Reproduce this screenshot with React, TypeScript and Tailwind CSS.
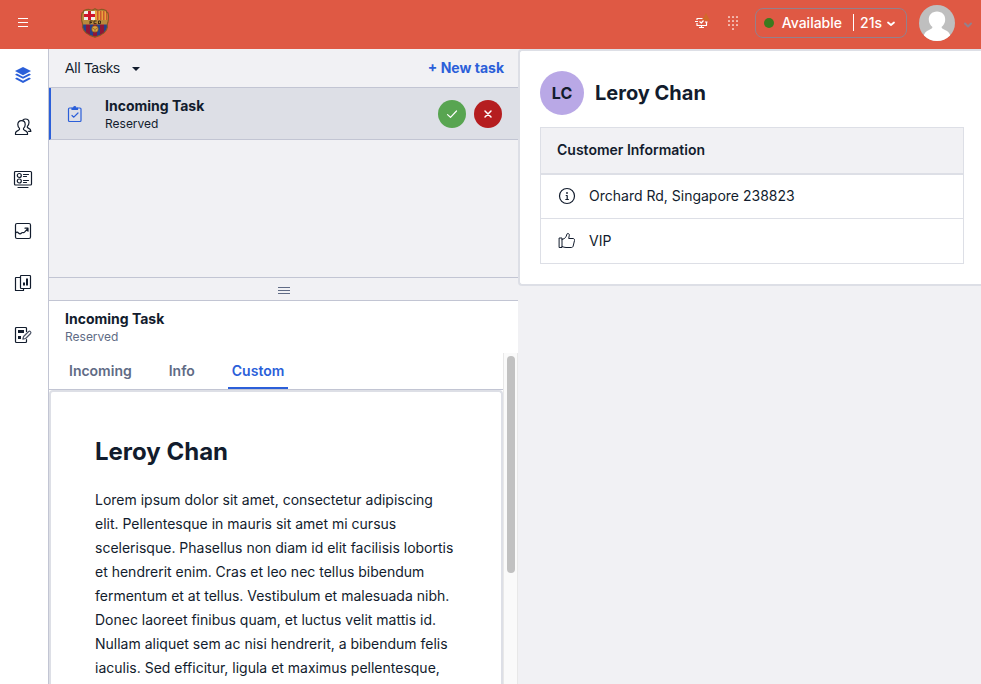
import type { ReactNode } from 'react';

function Icon({ children, size = 20, className = '' }: { children: ReactNode; size?: number; className?: string }) {
  return (
    <svg
      width={size}
      height={size}
      viewBox="0 0 20 20"
      fill="none"
      stroke="currentColor"
      strokeWidth="1.2"
      strokeLinecap="round"
      strokeLinejoin="round"
      className={className}
      aria-hidden="true"
    >
      {children}
    </svg>
  );
}

function Crest() {
  return (
    <svg width="30" height="30" viewBox="0 0 30 30" aria-hidden="true">
      <defs>
        <clipPath id="shield">
          <path d="M4 2.5Q8 .8 10.500 1.800Q13 2.600 15 .8Q17 2.600 19.500 1.800Q22 .8 26 2.500Q26.500 4.500 28 5Q29 9 28 14Q27 16 27.500 19Q26.500 26 15 29.200Q3.500 26 2.500 19Q3 16 2 14Q1 9 2 5Q3.500 4.500 4 2.500Z" />
        </clipPath>
      </defs>
      <g clipPath="url(#shield)">
        <path fill="#27408b" d="M0 12h30v18H0z" />
        <path fill="#f1eee9" d="M4 3h11v9.500H4z" />
        <path fill="#b98a3c" d="M0 0h4v14H0zM0 0h30v3H0z" />
        <path fill="#cf142b" d="M8 3h3v9.500H8zM4 6h11v3H4z" />
        <path fill="#e9a23b" d="M15 3h15v9.500H15z" />
        <path fill="#c9582f" d="M17 3h1.500v10H17zM20 3h1.500v10H20zM23 3h1.500v10H23zM26 3h1.500v10H26z" />
        <path fill="#8e1638" d="M6 16h4v14H6zM13 16h4v14h-4zM20 16h4v14h-4z" />
        <path fill="#b98a3c" d="M0 12h30v4.500H0z" />
        <path stroke="#3d2b18" strokeWidth="1" fill="none" d="M10 13v3M10 13h2.500M10 14.500h2M16.500 13h-2.500v2.600h2.500M18.500 13v3M18.500 13h2v2.600h-2" />
        <circle cx="15" cy="21" r="3.300" fill="#d9a441" stroke="#7a4a1e" strokeWidth=".6" />
        <path stroke="#7a4a1e" strokeWidth=".6" fill="none" d="M12.500 20l2.500 1.500 2.500-1.500M15 21.500v2.500" />
      </g>
      <path
        fill="none"
        stroke="#8a5a24"
        strokeWidth="1.200"
        d="M4 2.500Q8 .8 10.500 1.800Q13 2.600 15 .8Q17 2.600 19.500 1.800Q22 .8 26 2.500Q26.500 4.500 28 5Q29 9 28 14Q27 16 27.500 19Q26.500 26 15 29.200Q3.500 26 2.500 19Q3 16 2 14Q1 9 2 5Q3.500 4.500 4 2.500Z"
      />
    </svg>
  );
}

function Header() {
  return (
    <header className="flex h-[49px] shrink-0 items-center bg-[#df5944] pb-1 pr-2 text-white">
      <button type="button" aria-label="Toggle menu" className="flex w-12 justify-center pr-0.5">
        <svg width="12" height="12" viewBox="0 0 12 12" stroke="currentColor" aria-hidden="true">
          <path d="M1 1.500h10M1 5.500h10M1 9.500h10" />
        </svg>
      </button>
      <div className="ml-8">
        <Crest />
      </div>
      <div className="ml-auto flex items-center">
        <button type="button" aria-label="Connection status">
          <svg width="16" height="18" viewBox="0 0 16 18" fill="none" stroke="#fff" strokeLinejoin="round" className="mb-1" aria-hidden="true">
            <path stroke="none" fill="#d2692a" d="M12 1l4 7.500H8z" />
            <path strokeWidth="1.200" d="M8.500 6.500H3v1.500M3 11v2.500h9.500V10M1 9.500h3M7.500 13.500v2M5 15.500h5" />
            <path d="M5.500 9.500l1.800 1.500L9.500 8.500" strokeWidth="1.200" />
            <path d="M11 10h2.500" strokeWidth="1" />
          </svg>
        </button>
        <button type="button" aria-label="Dialpad" className="ml-4">
          <svg width="14" height="16" viewBox="0 0 14 16" fill="#f5c2b8" aria-hidden="true">
            {[1, 5, 9].map((y) => [2, 6, 10].map((x) => <rect key={`${x}-${y}`} x={x} y={y} width="2" height="2" rx=".4" />))}
            <rect x="6" y="13" width="2" height="2" rx=".4" />
          </svg>
        </button>
        <button
          type="button"
          className="ml-[15px] flex h-[30px] items-center rounded-lg border border-[#93808c] pl-2 pr-2.5 text-sm font-medium"
        >
          <span className="size-2.5 rounded-full bg-[#3b7a1e]" />
          <span className="ml-2">Available</span>
          <span className="ml-[11px] h-[17px] w-px bg-white" />
          <span className="ml-1.5">21s</span>
          <svg width="10" height="10" viewBox="0 0 10 10" fill="none" stroke="#fff" strokeWidth="1.800" strokeLinecap="round" strokeLinejoin="round" className="ml-1" aria-hidden="true">
            <path d="M2 4.500l3 2.500 3-2.500" />
          </svg>
        </button>
        <button type="button" aria-label="User menu" className="ml-3 flex items-center">
          <svg width="36" height="36" viewBox="0 0 36 36" aria-hidden="true">
            <defs>
              <clipPath id="avatar">
                <circle cx="18" cy="18" r="18" />
              </clipPath>
            </defs>
            <g clipPath="url(#avatar)">
              <path fill="#bfbfbf" d="M0 0h36v36H0z" />
              <path
                fill="#fff"
                d="M18 6.500c5 0 8.500 3.500 8.200 8.500-.2 3-1.700 5.500-3.700 7 .3 1.500 1.500 2 3.500 3 3 1.300 4.500 3 5.500 6V36h-27v-5c1-3 2.500-4.700 5.500-6 2-1 3.200-1.500 3.500-3-2-1.500-3.500-4-3.700-7C9.500 10 13 6.500 18 6.500z"
              />
            </g>
          </svg>
          <svg width="10" height="10" viewBox="0 0 10 10" fill="none" stroke="#93808c" strokeWidth="2" strokeLinecap="round" strokeLinejoin="round" className="ml-2 mt-1" aria-hidden="true">
            <path d="M2 3.500l3 3 3-3" />
          </svg>
        </button>
      </div>
    </header>
  );
}

const navItems: { label: string; icon: ReactNode; active?: boolean }[] = [
  {
    label: 'Agent desktop',
    active: true,
    icon: (
      <>
        <path fill="currentColor" stroke="none" d="M10 2l8 4-8 4.200L2 6z" />
        <path fill="currentColor" stroke="none" d="M3.800 8.500L10 11.700l6.200-3.200L18 9.700l-8 4.100-8-4.100zM3.800 12.500L10 15.700l6.200-3.200L18 13.700l-8 4.300-8-4.300z" />
      </>
    ),
  },
  {
    label: 'Teams',
    icon: (
      <>
        <path d="M8.500 3.700c2.300 0 3.700 1.600 3.700 3.800 0 1.700-.7 3-1.700 3.900-.3.900 0 1.500 1 1.900 1.700.6 3 1 3 3v1.200h-12v-1.200c0-2 1.300-2.400 3-3 1-.4 1.300-1 1-1.900-1-.9-1.700-2.200-1.700-3.900 0-2.200 1.400-3.800 3.700-3.800z" />
        <path d="M10 3c.8-.8 1.600-1 2.500-1 2.200 0 3.500 1.600 3.500 3.600 0 1.700-.7 2.900-1.600 3.800-.3.900 0 1.400.9 1.700 1.500.6 2.600 1.200 2.600 3.200h-2.300" />
      </>
    ),
  },
  {
    label: 'Queues',
    icon: (
      <>
        <rect x="1.500" y="2.500" width="17" height="13.500" rx="1" />
        <circle cx="6.300" cy="6.500" r="2" />
        <circle cx="6.300" cy="12" r="2" />
        <path d="M10.500 5.500h5M10.500 7.500h3M10.500 11.500h5M10.500 13.500h3M5 18.500h10" />
      </>
    ),
  },
  {
    label: 'Analytics',
    icon: (
      <>
        <rect x="2.500" y="2.500" width="15" height="15" rx="1.500" />
        <path d="M2.500 12c1-1 2-1.200 3 0 1 1 2 1.200 3 0s2 .2 3-.8l3.500-3.700M12 7.200h3v3" />
      </>
    ),
  },
  {
    label: 'Dashboards',
    icon: (
      <>
        <path d="M7.500 4.500H3a.5.5 0 0 0-.5.500v12.500h8V16" />
        <rect x="7.500" y="2.500" width="10" height="13" rx=".8" />
        <path d="M11 12.500v-3M14 12.500v-7" strokeWidth="2" strokeLinecap="butt" />
      </>
    ),
  },
  {
    label: 'Task notes',
    icon: (
      <>
        <path d="M13.500 6.500V3.500a1 1 0 0 0-1-1H3.500a1 1 0 0 0-1 1v13a1 1 0 0 0 1 1h9a1 1 0 0 0 1-1V14.500" />
        <path d="M5 6.500h6" strokeWidth="3" strokeLinecap="butt" />
        <path d="M5 12.500h3" strokeWidth="3" strokeLinecap="butt" />
        <path d="M9.800 14.200l.8-2.700 5-5c1.200-1 3 .6 2 2l-5 5z" stroke="#4b5366" />
      </>
    ),
  },
];

function SideNav() {
  return (
    <nav className="flex w-[49px] shrink-0 flex-col border-r border-[#c2c5d3] bg-white pr-0.5">
      {navItems.map((item) => (
        <a
          key={item.label}
          href="#"
          aria-label={item.label}
          className={`flex h-[52px] items-center justify-center ${item.active ? 'text-[#2b5fd9]' : 'text-[#121c2d]'}`}
        >
          <Icon>{item.icon}</Icon>
        </a>
      ))}
    </nav>
  );
}

function TaskList() {
  return (
    <section className="flex h-[228px] shrink-0 flex-col">
      <div className="flex h-[39px] items-center justify-between border-b border-[#c2c5d3] pl-4 pr-3.5">
        <button type="button" className="flex items-center font-['Liberation_Sans',sans-serif] text-sm">
          All Tasks
          <svg width="10" height="6" viewBox="0 0 10 6" fill="currentColor" className="ml-[11px] mt-0.5" aria-hidden="true">
            <path d="M1 1h8L5 5z" />
          </svg>
        </button>
        <button type="button" className="text-sm font-bold text-[#2b5fd9]">
          + New task
        </button>
      </div>
      <div className="flex h-[52px] items-center border-b border-l-2 border-b-[#c2c5d3] border-l-[#2b5fd9] bg-[#dddfe6] pl-3.5 pr-4">
        <Icon className="text-[#2b5fd9]">
          <path d="M7 4H4.500a1 1 0 0 0-1 1v11.500a1 1 0 0 0 1 1h10.500a1 1 0 0 0 1-1V5a1 1 0 0 0-1-1H12.500" />
          <path fill="currentColor" d="M7 4h1.500c.2-1.900 2.300-1.900 2.500 0h1.500v1.500h-5.500z" />
          <path d="M7 11.500l1.800 1.700L13 9" />
        </Icon>
        <div className="ml-5">
          <h2 className="text-sm/5 font-bold">Incoming Task</h2>
          <p className="text-xs">Reserved</p>
        </div>
        <button type="button" aria-label="Accept task" className="ml-auto flex size-7 items-center justify-center rounded-full bg-[#58a551] text-white">
          <Icon size={12} className="stroke-2">
            <path d="M2.500 11l5 4.500L17.500 5" />
          </Icon>
        </button>
        <button type="button" aria-label="Reject task" className="ml-2 flex size-7 items-center justify-center rounded-full bg-[#b51d1f] text-white">
          <Icon size={12} className="stroke-[2.500]">
            <path d="M5 5l10 10M15 5L5 15" />
          </Icon>
        </button>
      </div>
    </section>
  );
}

function TaskDetail() {
  const tab = 'flex h-9 items-center border-b-2 px-1 pt-0.5';
  return (
    <section className="flex min-h-0 flex-1 flex-col bg-white">
      <div className="h-[52px] shrink-0 px-4 pt-2">
        <h2 className="text-sm/5 font-bold">Incoming Task</h2>
        <p className="text-xs text-[#606b85]">Reserved</p>
      </div>
      <div className="flex min-h-0 flex-1">
        <div className="flex min-w-0 flex-1 flex-col">
          <div role="tablist" className="flex h-[37px] shrink-0 gap-[29px] border-b border-[#c2c5d3] px-4 text-sm font-semibold text-[#606b85]">
            <button type="button" role="tab" aria-selected="false" className={`${tab} border-transparent`}>Incoming</button>
            <button type="button" role="tab" aria-selected="false" className={`${tab} border-transparent`}>Info</button>
            <button type="button" role="tab" aria-selected="true" className={`${tab} border-[#2b5fd9] text-[#2b5fd9]`}>Custom</button>
          </div>
          <article className="min-h-0 flex-1 overflow-hidden rounded-t border-2 border-b-0 border-[#dddfe6] px-11 pt-11">
            <h1 className="text-2xl font-bold">Leroy Chan</h1>
            <p className="mt-5 text-sm/6">
              Lorem ipsum dolor sit amet, consectetur adipiscing elit. Pellentesque in mauris sit amet mi cursus
              scelerisque. Phasellus non diam id elit facilisis lobortis et hendrerit enim. Cras et leo nec tellus
              bibendum fermentum et at tellus. Vestibulum et malesuada nibh. Donec laoreet finibus quam, et luctus velit
              mattis id. Nullam aliquet sem ac nisi hendrerit, a bibendum felis iaculis. Sed efficitur, ligula et
              maximus pellentesque,
            </p>
          </article>
        </div>
        <div className="w-[15px] shrink-0 border-x border-[#e8e8e8] bg-[#fafafa] px-[3px] pt-[3px]">
          <div className="h-[217px] w-2 rounded-full bg-[#c1c1c1]" />
        </div>
      </div>
    </section>
  );
}

function CustomerCard() {
  return (
    <section className="rounded-l border-2 border-r-0 border-[#dddfe6] bg-white py-5 pl-5 pr-[17px]">
      <div className="flex items-center">
        <div className="flex size-11 items-center justify-center rounded-full bg-[#b9a8e6] font-bold">LC</div>
        <h1 className="ml-[11px] text-xl font-bold">Leroy Chan</h1>
      </div>
      <table className="mt-3 w-full border-collapse border border-[#dddfe6] text-left text-sm">
        <thead className="border-b-2 border-[#dddfe6] bg-[#f1f1f4]">
          <tr>
            <th scope="col" className="h-[46px] px-4 font-semibold">Customer Information</th>
          </tr>
        </thead>
        <tbody>
          <tr className="border-b border-[#dddfe6]">
            <td className="h-[45px] px-4">
              <div className="flex items-center gap-3">
                <Icon>
                  <circle cx="10" cy="10" r="7.500" />
                  <path d="M10 7v.1" strokeWidth="1.800" />
                  <path d="M9.200 9.500h1v4M8.800 13.500h2.600" />
                </Icon>
                Orchard Rd, Singapore 238823
              </div>
            </td>
          </tr>
          <tr>
            <td className="h-[45px] px-4">
              <div className="flex items-center gap-3">
                <Icon className="stroke-1">
                  <path d="M2.500 7h2.500v9.500H2.500z" />
                  <path d="M5 8.500l2-.8c1.300-.7 1.800-1.500 2.300-2.700l.7-2c.4-1 2.500-.6 2.300 1.200l-.6 3.300h4.300c1.200 0 1.700.9 1.500 2l-1.300 5.500c-.3 1-.9 1.500-1.900 1.500H9c-1.500 0-2.500-.5-4-1" />
                </Icon>
                VIP
              </div>
            </td>
          </tr>
        </tbody>
      </table>
    </section>
  );
}

export default function App() {
  return (
    <div className="flex h-screen flex-col overflow-hidden bg-[#f1f1f4] font-['Inter',sans-serif] text-[#121c2d]">
      <Header />
      <div className="flex min-h-0 flex-1">
        <SideNav />
        <main className="grid min-h-0 flex-1 grid-cols-[469fr_463fr]">
          <div className="flex min-h-0 min-w-0 flex-col">
            <TaskList />
            <div className="flex h-6 shrink-0 items-center justify-center border-y border-[#c2c5d3] text-[#606b85]">
              <svg width="12" height="8" viewBox="0 0 12 8" stroke="currentColor" className="mt-1" aria-hidden="true">
                <path d="M0 .5h12M0 3.500h12M0 6.500h12" />
              </svg>
            </div>
            <TaskDetail />
          </div>
          <aside className="min-w-0">
            <CustomerCard />
          </aside>
        </main>
      </div>
    </div>
  );
}
